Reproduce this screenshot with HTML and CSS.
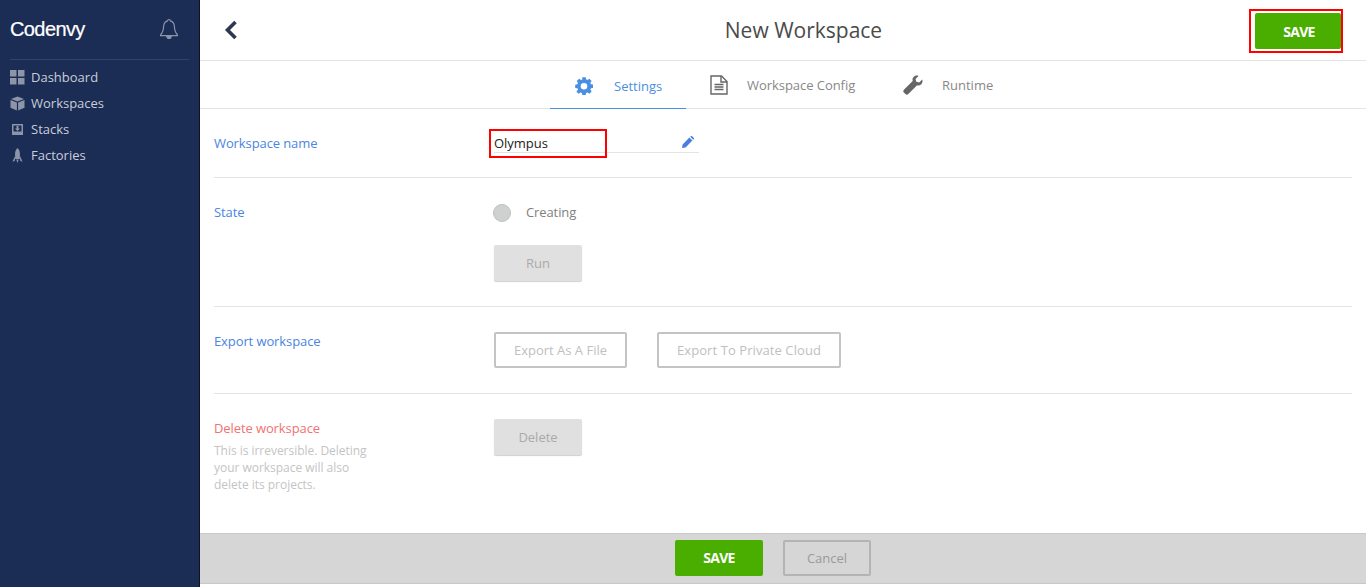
FILE: index.html
```html
<!DOCTYPE html>
<html lang="en">
<head>
    <meta charset="UTF-8">
    <title>New Workspace</title>
    <link rel="stylesheet" href="styles.css">
</head>
<body>
    <div class="app">
        <!-- Left navigation -->
        <nav class="sidebar">
            <div class="brand">
                <span class="logo">Codenvy</span>
                <svg class="bell" width="20" height="22" viewBox="0 0 20 22" fill="none" stroke="#8a93a8" stroke-width="1.2">
                    <path d="M10 1.5c-.9 0-1.4.6-1.4 1.4C5.800 3.700 4.700 6 4.600 8.600c-.1 3.600-.8 6-3 8.100v1h16.800v-1c-2.200-2.100-2.900-4.500-3-8.100-.1-2.600-1.200-4.900-4-5.700 0-.8-.5-1.400-1.400-1.400z"/>
                    <path d="M7.800 18c0 1.500 1 2.500 2.200 2.500s2.200-1 2.200-2.500" fill="#8a93a8"/>
                </svg>
            </div>
            <ul class="nav-list">
                <li class="nav-item">
                    <svg class="nav-icon" width="15" height="15" viewBox="0 0 15 15" fill="#8d96a8">
                        <rect x="0" y="0" width="6.500" height="6.500"/><rect x="8" y="0" width="6.500" height="6.500"/>
                        <rect x="0" y="8" width="6.500" height="6.500"/><rect x="8" y="8" width="6.500" height="6.500"/>
                    </svg>
                    Dashboard
                </li>
                <li class="nav-item">
                    <svg class="nav-icon" width="15" height="15" viewBox="0 0 15 15" fill="#8d96a8">
                        <path d="M7.500.5l6.500 2.400-6.500 2.500L1 2.900z"/><path d="M.5 4l6.400 2.500v8L.5 11.800z"/><path d="M14.500 4L8.100 6.500v8l6.400-2.700z"/>
                    </svg>
                    Workspaces
                </li>
                <li class="nav-item">
                    <svg class="nav-icon" width="15" height="15" viewBox="0 0 15 15">
                        <path fill="#8d96a8" d="M2 2h11v11H2z"/>
                        <path fill="#1b2c55" d="M3.500 3.500h8v6h-8z"/>
                        <path fill="#8d96a8" d="M6.500 4h2v2.500h1.500L7.500 9 5 6.500h1.500z"/>
                    </svg>
                    Stacks
                </li>
                <li class="nav-item">
                    <svg class="nav-icon" width="15" height="15" viewBox="0 0 15 15" fill="#8d96a8">
                        <path d="M7.500 0c1.500 1.500 2.400 3.500 2.400 5.500v5.500H5.100V5.500C5.100 3.500 6 1.500 7.500 0z"/>
                        <path d="M4.800 8L2.500 14l2.500-1.400zM10.200 8l2.300 6-2.500-1.400z"/><path d="M6.300 11.500h2.400L7.500 15z"/>
                    </svg>
                    Factories
                </li>
            </ul>
        </nav>

        <main class="content">
            <header class="topbar">
                <svg class="back" width="14" height="20" viewBox="0 0 14 20" fill="none" stroke="#2c3850" stroke-width="3.600">
                    <path d="M11.500 2L3.500 10l8 8"/>
                </svg>
                <h1 class="title">New Workspace</h1>
                <div class="marked marked-save">
                    <button class="btn-save btn-save-top" type="button">SAVE</button>
                </div>
            </header>

            <!-- Tabs -->
            <div class="tabs">
                <div class="tab tab-active">
                    <svg width="18" height="18" viewBox="0 0 18 18" fill="#4a90e2">
                        <path fill-rule="evenodd" d="M7.300 1h3.400l.4 2.200 1.300.6 1.900-1.300 2.400 2.400-1.300 1.900.6 1.300 2.200.4v3.400l-2.200.4-.6 1.300 1.300 1.900-2.400 2.400-1.900-1.300-1.300.6-.4 2.200H7.300l-.4-2.200-1.300-.6-1.900 1.300-2.400-2.400L3 13.700l-.6-1.300L.2 12V8.600l2.200-.4.6-1.300-1.300-1.900 2.400-2.400 1.900 1.300 1.300-.6zM9 7a3.300 3.300 0 1 0 0 6.600A3.300 3.300 0 0 0 9 7z" transform="translate(0 -.8) scale(1 .98)"/>
                    </svg>
                    <span>Settings</span>
                </div>
                <div class="tab tab-config">
                    <svg width="18" height="20" viewBox="0 0 18 20" fill="none" stroke="#666" stroke-width="1.400">
                        <path d="M1 1h10.500L17 6.500V19H1z"/><path d="M11 1v6h6"/>
                        <path d="M4.500 9.500h9M4.500 12h9M4.500 14.500h9" stroke-width="1.500"/>
                    </svg>
                    <span>Workspace Config</span>
                </div>
                <div class="tab tab-runtime">
                    <svg width="20" height="20" viewBox="0 0 20 20" fill="#666">
                        <path d="M13.800.5c-2.800 0-4.900 2.600-4.100 5.400L.9 14.700c-.8.800-.8 2.100 0 2.900l1.500 1.500c.8.800 2.100.8 2.900 0l8.800-8.800c2.800.8 5.400-1.300 5.400-4.100 0-.6-.1-1.100-.3-1.600l-3 3-2.900-.8-.8-2.900 3-3c-.5-.2-1-.4-1.600-.4z"/>
                    </svg>
                    <span>Runtime</span>
                </div>
            </div>

            <!-- Settings rows -->
            <section class="row row-name">
                <div class="label">Workspace name</div>
                <div class="name-field">
                    <span class="marked marked-name">Olympus</span>
                    <svg class="pencil" width="12" height="12" viewBox="0 0 12 12" fill="#4a7fe0">
                        <path d="M0 12l.6-3.600L7.400 1.600l3 3L3.600 11.400zM8.300.8l.7-.7c.3-.2.6-.2.9 0l2 2c.2.3.2.6 0 .9l-.7.7z"/>
                    </svg>
                </div>
            </section>

            <section class="row row-state">
                <div class="label">State</div>
                <div class="value">
                    <div class="state-line">
                        <span class="dot"></span>
                        <span class="state-text">Creating</span>
                    </div>
                    <button class="btn-grey" type="button">Run</button>
                </div>
            </section>

            <section class="row row-export">
                <div class="label">Export workspace</div>
                <div class="value export-btns">
                    <button class="btn-outline btn-file" type="button">Export As A File</button>
                    <button class="btn-outline btn-cloud" type="button">Export To Private Cloud</button>
                </div>
            </section>

            <section class="row row-delete">
                <div class="label-col">
                    <div class="label label-danger">Delete workspace</div>
                    <p class="hint">This is irreversible. Deleting your workspace will also delete its projects.</p>
                </div>
                <div class="value">
                    <button class="btn-grey" type="button">Delete</button>
                </div>
            </section>

            <footer class="savebar">
                <button class="btn-save" type="button">SAVE</button>
                <button class="btn-cancel" type="button">Cancel</button>
            </footer>
        </main>
    </div>
</body>
</html>
```

FILE: styles.css
```css
* {
    box-sizing: border-box;
}

html, body {
    height: 100%;
}

body {
    margin: 0;
    font-family: "Open Sans", sans-serif;
    font-size: 13px;
    background-color: #fff;
    overflow: hidden;
}

.app {
    display: flex;
    height: 587px;
}

/* Sidebar */
.sidebar {
    width: 200px;
    flex-shrink: 0;
    background-color: #1b2c55;
    border-right: 1px solid #10131c;
    padding: 0 10px;
}

.brand {
    display: flex;
    align-items: center;
    justify-content: space-between;
    height: 60px;
    border-bottom: 1px solid #33426a;
    padding-right: 10px;
}

.logo {
    font-family: "Liberation Sans", sans-serif;
    font-size: 20px;
    letter-spacing: -0.6px;
    color: #fff;
    -webkit-text-stroke: 0.2px #fff;
}

.bell {
    margin-bottom: 1px;
}

.nav-list {
    list-style: none;
    margin: 0;
    padding: 4px 0 0;
}

.nav-item {
    display: flex;
    align-items: center;
    gap: 6px;
    height: 26px;
    color: #c9ced8;
    font-size: 13px;
}

/* Main column */
.content {
    flex: 1;
    display: flex;
    flex-direction: column;
    min-width: 0;
}

.topbar {
    position: relative;
    display: flex;
    align-items: center;
    height: 61px;
    flex-shrink: 0;
    padding: 0 24px;
    border-bottom: 1px solid #e4e4e4;
}

.title {
    position: absolute;
    left: 0;
    right: 0;
    margin: 0;
    text-align: center;
    font-size: 21px;
    font-weight: 400;
    color: #4a4a4a;
    padding-left: 41px;
}

.marked {
    outline: 2px solid #f00;
}

.marked-save {
    position: absolute;
    top: 11px;
    left: 1051px;
    width: 90px;
    height: 40px;
    padding: 2px 0 0 4px;
}

.btn-save {
    width: 88px;
    height: 36px;
    border: none;
    border-radius: 2px;
    background-color: #4aae00;
    color: #fff;
    font-family: "Open Sans", sans-serif;
    font-size: 14px;
    font-weight: 700;
    letter-spacing: -0.7px;
}

.btn-save-top {
    display: block;
    width: 86px;
    padding-left: 8px;
}

/* Tabs */
.tabs {
    display: flex;
    height: 48px;
    flex-shrink: 0;
    padding-left: 350px;
    border-bottom: 1px solid #e4e4e4;
    color: #888;
}

.tab {
    display: flex;
    align-items: center;
    height: 48px;
    padding-bottom: 1px;
}

.tab-active {
    width: 136px;
    padding-left: 25px;
    padding-top: 2px;
    padding-bottom: 0;
    gap: 21px;
    color: #4a90e2;
    border-bottom: 1px solid #4a90e2;
}

.tab-config {
    width: 217px;
    padding-left: 24px;
    gap: 19px;
    letter-spacing: -0.05px;
}

.tab-runtime {
    padding-left: 0;
    gap: 19px;
}

/* Rows */
.row {
    display: flex;
    flex-shrink: 0;
    margin: 0 14px;
    border-bottom: 1px solid #e4e4e4;
}

.label {
    width: 280px;
    flex-shrink: 0;
    color: #4a85e0;
    letter-spacing: -0.1px;
}

.label-col {
    width: 280px;
    flex-shrink: 0;
}

.label-danger {
    color: #f07272;
}

.hint {
    width: 160px;
    margin: 5px 0 0;
    font-size: 12px;
    line-height: 17px;
    color: #c4c4c4;
    letter-spacing: -0.03px;
}

.row-name {
    height: 69px;
    padding-top: 25px;
}

.name-field {
    position: relative;
    width: 205px;
    height: 19px;
    border-bottom: 1px solid #e4e4e4;
    color: #222;
}

.marked-name {
    position: absolute;
    top: -3px;
    left: -3px;
    width: 114px;
    height: 25px;
    padding: 3px 0 0 3px;
    letter-spacing: -0.03px;
}

.pencil {
    position: absolute;
    right: 5px;
    top: 2px;
}

.row-state {
    height: 129px;
    padding-top: 25px;
}

.state-line {
    display: flex;
    align-items: center;
    gap: 15px;
    height: 19px;
    margin-bottom: 23px;
    margin-left: -1px;
}

.dot {
    width: 18px;
    height: 18px;
    border-radius: 50%;
    background-color: #d0d0d0;
    border: 1px solid #b8c4c8;
}

.state-text {
    color: #808080;
    letter-spacing: -0.1px;
    margin-top: -2px;
}

.btn-grey {
    display: block;
    width: 88px;
    height: 36px;
    border: none;
    border-radius: 2px;
    background-color: #e0e0e0;
    box-shadow: 0 1px 1px #cfcfcf;
    color: #aaa;
    font-family: "Open Sans", sans-serif;
    font-size: 13px;
}

.row-export {
    height: 87px;
    padding-top: 25px;
}

.export-btns {
    display: flex;
    gap: 30px;
}

.btn-outline {
    height: 36px;
    border: 2px solid #c4c4c4;
    border-radius: 2px;
    background-color: #fff;
    color: #c0c0c0;
    font-family: "Open Sans", sans-serif;
    font-size: 13px;
}

.btn-file {
    width: 133px;
}

.btn-cloud {
    width: 184px;
    letter-spacing: 0.08px;
}

.row-delete {
    height: 139px;
    padding-top: 25px;
    border-bottom: none;
}

/* Bottom save bar */
.savebar {
    display: flex;
    justify-content: center;
    align-items: center;
    gap: 20px;
    height: 51px;
    flex-shrink: 0;
    background-color: #d6d6d6;
    border-top: 1px solid #c8c8c8;
    border-bottom: 1px solid #c8c8c8;
    padding-right: 20px;
    padding-bottom: 2px;
}

.btn-cancel {
    width: 88px;
    height: 36px;
    border: 2px solid #b4b4b4;
    border-radius: 2px;
    background: transparent;
    color: #9a9a9a;
    font-family: "Open Sans", sans-serif;
    font-size: 13px;
}
```
